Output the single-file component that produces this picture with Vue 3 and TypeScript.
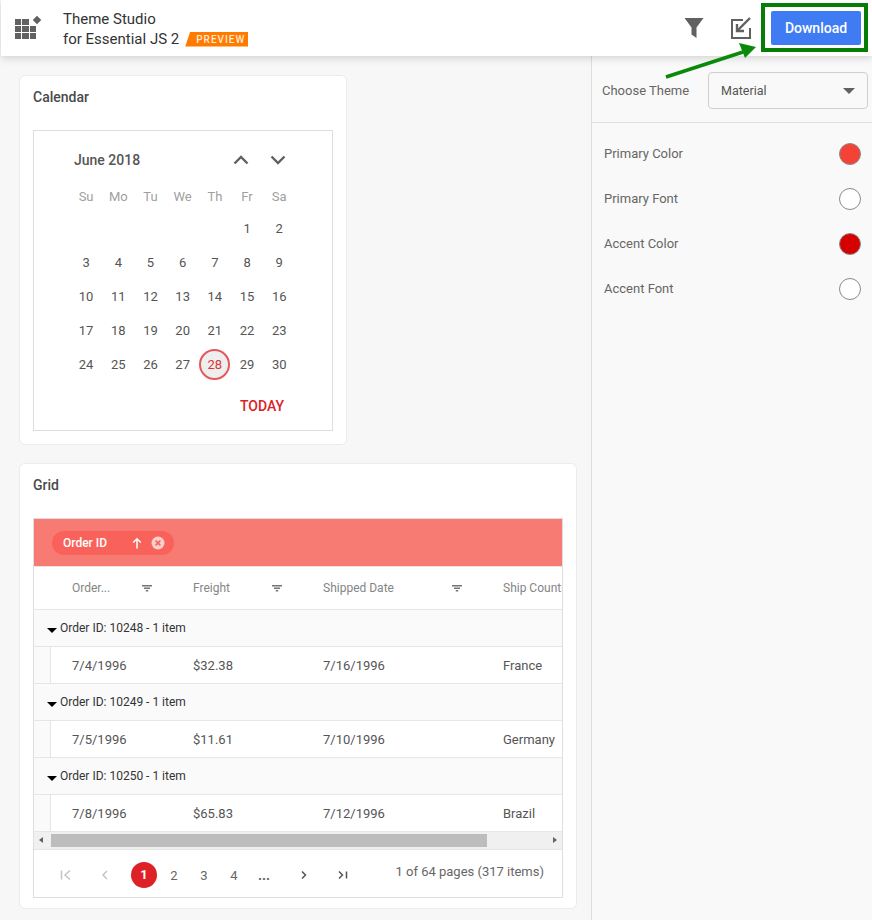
<script setup lang="ts">
const weekdays = ['Su', 'Mo', 'Tu', 'We', 'Th', 'Fr', 'Sa']
const blanks = [1, 2, 3, 4, 5]
const days = Array.from({ length: 30 }, (_, i) => i + 1)

const orders = [
  { id: 10248, date: '7/4/1996', freight: '$32.38', shipped: '7/16/1996', country: 'France' },
  { id: 10249, date: '7/5/1996', freight: '$11.61', shipped: '7/10/1996', country: 'Germany' },
  { id: 10250, date: '7/8/1996', freight: '$65.83', shipped: '7/12/1996', country: 'Brazil' }
]

const columns = ['Order...', 'Freight', 'Shipped Date', 'Ship Country']

const themeRows = [
  { label: 'Primary Color', color: '#f44336' },
  { label: 'Primary Font', color: '#ffffff' },
  { label: 'Accent Color', color: '#d50000' },
  { label: 'Accent Font', color: '#ffffff' }
]
</script>

<template>
  <div class="page">
    <header class="topbar">
      <div class="logo">
        <span></span><span></span><span class="diamond"></span>
        <span></span><span></span><span></span>
        <span></span><span></span><span></span>
      </div>
      <div class="title">
        <div>Theme Studio</div>
        <div class="title-sub">for Essential JS 2 <span class="badge">PREVIEW</span></div>
      </div>
      <div class="top-actions">
        <svg class="ico-filter" width="22" height="22" viewBox="0 0 22 22">
          <path d="M1.500 1h19l-7 9.500V21l-5-3.500v-7z" fill="#616161" />
        </svg>
        <svg class="ico-export" width="24" height="24" viewBox="0 0 24 24" fill="none" stroke="#616161" stroke-width="2">
          <path d="M14 4H3v18h18V12" />
          <path d="M21 2 9 14" stroke-width="2.4" />
          <path d="M8 8v7h7" stroke-width="2.4" />
        </svg>
        <button class="download">Download</button>
      </div>
    </header>

    <div class="body">
      <main class="content">
        <section class="card calendar-card">
          <h2>Calendar</h2>
          <div class="calendar">
            <div class="cal-head">
              <span class="cal-title">June 2018</span>
              <svg width="16" height="12" viewBox="0 0 16 12" fill="none" stroke="#616161" stroke-width="2.4">
                <path d="M1.500 9.500 8 3l6.500 6.500" />
              </svg>
              <svg class="cal-next" width="16" height="12" viewBox="0 0 16 12" fill="none" stroke="#616161" stroke-width="2.4">
                <path d="M1.500 2.500 8 9l6.500-6.500" />
              </svg>
            </div>
            <div class="cal-week">
              <span v-for="d in weekdays" :key="d">{{ d }}</span>
            </div>
            <div class="cal-days">
              <span v-for="b in blanks" :key="'b' + b"></span>
              <span v-for="d in days" :key="d" class="day" :class="{ today: d === 28 }">
                <i>{{ d }}</i>
              </span>
            </div>
            <div class="cal-foot">TODAY</div>
          </div>
        </section>

        <section class="card grid-card">
          <h2>Grid</h2>
          <div class="grid">
            <div class="drop-area">
              <div class="chip">
                <span class="chip-text">Order ID</span>
                <svg width="10" height="12" viewBox="0 0 10 12" fill="none" stroke="#fff" stroke-width="1.5">
                  <path d="M5 11.500V2M1.200 5.500 5 1.800l3.800 3.700" />
                </svg>
                <svg class="chip-x" width="14" height="14" viewBox="0 0 14 14">
                  <circle cx="7" cy="7" r="6.500" fill="#fbd0cd" />
                  <path d="M4.600 4.600l4.800 4.800M9.400 4.600 4.600 9.400" stroke="#f9625a" stroke-width="1.600" />
                </svg>
              </div>
            </div>
            <div class="grid-clip">
              <div class="row head">
                <div class="indent"></div>
                <div v-for="c in columns" :key="c" class="cell">
                  <span>{{ c }}</span>
                  <svg v-if="c !== 'Ship Country'" class="col-filter" width="10" height="7" viewBox="0 0 10 7">
                    <path d="M0 0h10v1.500H0zM2 2.600h6V4H2zM3.800 5h2.400v1.400H3.800z" fill="#757575" />
                  </svg>
                </div>
              </div>
              <template v-for="o in orders" :key="o.id">
                <div class="group-row">
                  <i class="caret"></i>
                  <span>Order ID: {{ o.id }} - 1 item</span>
                </div>
                <div class="row data">
                  <div class="indent"></div>
                  <div class="cell">{{ o.date }}</div>
                  <div class="cell">{{ o.freight }}</div>
                  <div class="cell">{{ o.shipped }}</div>
                  <div class="cell">{{ o.country }}</div>
                </div>
              </template>
            </div>
            <div class="scrollbar">
              <i class="sb-left"></i>
              <div class="sb-thumb"></div>
              <i class="sb-right"></i>
            </div>
            <div class="pager">
              <div class="pages">
                <svg class="pg-first" width="12" height="12" viewBox="0 0 12 12" fill="none" stroke="#c4c4c4" stroke-width="1.500">
                  <path d="M1.500 1.500v9M10 1.500 5 6l5 4.500" />
                </svg>
                <svg class="pg-prev" width="12" height="12" viewBox="0 0 12 12" fill="none" stroke="#c4c4c4" stroke-width="1.500">
                  <path d="M8 2 4 6l4 4" />
                </svg>
                <span class="pg-num current">1</span>
                <span class="pg-num">2</span>
                <span class="pg-num">3</span>
                <span class="pg-num">4</span>
                <span class="pg-num dots">...</span>
                <svg class="pg-next" width="12" height="12" viewBox="0 0 12 12" fill="none" stroke="#555" stroke-width="1.500">
                  <path d="M4 2.500 7.500 6 4 9.500" />
                </svg>
                <svg class="pg-last" width="12" height="12" viewBox="0 0 12 12" fill="none" stroke="#555" stroke-width="1.500">
                  <path d="M2 2.500 5.500 6 2 9.500M9.500 2.500v7" />
                </svg>
              </div>
              <span class="pg-info">1 of 64 pages (317 items)</span>
            </div>
          </div>
        </section>
      </main>

      <aside class="sidebar">
        <div class="theme-pick">
          <span class="pick-label">Choose Theme</span>
          <div class="select">
            <span>Material</span>
            <i class="select-caret"></i>
          </div>
        </div>
        <div class="theme-rows">
          <div v-for="r in themeRows" :key="r.label" class="theme-row">
            <span>{{ r.label }}</span>
            <i class="swatch" :style="{ background: r.color }"></i>
          </div>
        </div>
      </aside>
    </div>

    <!-- annotation over the screenshot -->
    <div class="callout"></div>
    <svg class="callout-arrow" width="100" height="40" viewBox="0 0 100 40">
      <path d="M1 35 78 10" stroke="#0a8a0a" stroke-width="3.500" fill="none" />
      <path d="M91 5 74 1l6 15z" fill="#0a8a0a" />
    </svg>
  </div>
</template>

<style>
html,
body {
  margin: 0;
  background: #f7f7f7;
}
</style>

<style scoped>
.page {
  position: relative;
  width: 872px;
  height: 920px;
  overflow: hidden;
  display: flex;
  flex-direction: column;
  background: #f7f7f7;
  font-family: Roboto, 'Liberation Sans', sans-serif;
  color: #444;
}

/* 顶部栏 */
.topbar {
  position: relative;
  z-index: 2;
  flex: 0 0 56px;
  display: flex;
  align-items: center;
  margin-left: 1px;
  background: #fff;
  box-shadow: 0 2px 8px rgba(0, 0, 0, 0.16);
}

.logo {
  display: grid;
  grid-template-columns: repeat(3, 6.33px);
  grid-auto-rows: 6.33px;
  gap: 1px;
  margin: 2px 0 0 14px;
}

.logo span {
  background: #616161;
}

.logo .diamond {
  width: 6px;
  height: 6px;
  transform: translate(4px, -2px) rotate(45deg);
}

.title {
  margin-left: 27px;
  padding-top: 2px;
  font-size: 15px;
  line-height: 20px;
  color: #333;
}

.title-sub {
  display: flex;
  align-items: center;
  gap: 6px;
}

.badge {
  display: inline-block;
  height: 15px;
  padding: 0 4px 0 11px;
  width: 48px;
  background: #ff7b00;
  clip-path: polygon(5px 0, 100% 0, 100% 100%, 0 100%);
  color: #ffe9d4;
  font-size: 10px;
  font-weight: 500;
  line-height: 16px;
  letter-spacing: 1px;
}

.top-actions {
  margin-left: auto;
  display: flex;
  align-items: center;
  padding-right: 11px;
}

.ico-export {
  margin: 0 18px 0 24px;
}

.download {
  width: 90px;
  height: 34px;
  padding: 0;
  border: none;
  border-radius: 2px;
  background: #3f7cf4;
  color: #fff;
  font-family: inherit;
  font-size: 14px;
  font-weight: 500;
}

.body {
  flex: 1;
  display: flex;
  min-height: 0;
}

.content {
  flex: 0 0 591px;
  box-sizing: border-box;
  padding: 19px 0 0 19px;
  display: flex;
  flex-direction: column;
  align-items: flex-start;
  gap: 18px;
}

.card {
  box-sizing: border-box;
  padding: 0 13px 12px;
  background: #fff;
  border: 1px solid #ececec;
  border-radius: 6px;
}

.card h2 {
  margin: 0;
  font-size: 14px;
  font-weight: 500;
  line-height: 20px;
  color: #4a4a4a;
}

/* 日历 */
.calendar-card {
  width: 328px;
  height: 370px;
  padding-bottom: 13px;
}

.calendar-card h2 {
  padding: 11px 0 23px;
}

.calendar {
  box-sizing: border-box;
  height: 301px;
  padding: 0 37px 0 36px;
  border: 1px solid #dedede;
}

.cal-head {
  display: flex;
  align-items: center;
  height: 58px;
  padding-left: 4px;
}

.cal-title {
  flex: 1;
  font-size: 14px;
  font-weight: 500;
  color: #555;
}

.cal-next {
  margin: 0 9px 0 21px;
}

.cal-week,
.cal-days {
  display: grid;
  grid-template-columns: repeat(7, 32.2px);
  text-align: center;
}

.cal-week {
  height: 22px;
  margin-top: 1px;
  font-size: 13px;
  line-height: 14px;
  color: #a0a0a0;
}

.cal-days {
  margin-top: -1px;
  grid-auto-rows: 34px;
  font-size: 13px;
  color: #555;
}

.day {
  display: flex;
  align-items: center;
  justify-content: center;
}

.day i {
  font-style: normal;
}

.today i {
  box-sizing: border-box;
  width: 31px;
  height: 31px;
  border: 2px solid #e5575b;
  border-radius: 50%;
  background: #eeeeee;
  color: #d9363b;
  line-height: 28px;
}

.cal-foot {
  margin-top: 16px;
  padding-right: 11px;
  text-align: right;
  font-size: 14px;
  font-weight: 500;
  line-height: 18px;
  color: #dc2127;
}

/* 表格 */
.grid-card {
  width: 558px;
  height: 446px;
}

.grid-card h2 {
  padding: 11px 0 23px;
}

.grid {
  box-sizing: border-box;
  height: 380px;
  border: 1px solid #dedede;
  overflow: hidden;
}

.drop-area {
  box-sizing: border-box;
  height: 48px;
  padding: 12px 18px;
  background: #f87b73;
  border-bottom: 1px solid #e6e6e6;
}

.chip {
  display: flex;
  align-items: center;
  width: 122px;
  height: 24px;
  box-sizing: border-box;
  padding: 0 9px 0 11px;
  border-radius: 12px;
  background: #f9625a;
  color: #fff;
  font-size: 12px;
  font-weight: 500;
}

.chip-text {
  flex: 1;
}

.chip-x {
  margin-left: 9px;
}

.grid-clip {
  overflow: hidden;
  height: 265px;
}

.row {
  display: grid;
  grid-template-columns: 17px 121px 130px 180px 120px;
  width: 600px;
  box-sizing: border-box;
}

.row.head {
  height: 43px;
  border-bottom: 1px solid #e6e6e6;
  font-size: 12px;
  color: #858585;
}

.row.data {
  height: 37px;
  font-size: 13px;
  color: #555;
  border-bottom: 1px solid #e6e6e6;
}

.row .indent {
  box-sizing: border-box;
  border-right: 1px solid transparent;
}

.row.data .indent {
  background: #fafafa;
  border-right-color: #e6e6e6;
}

.cell {
  position: relative;
  display: flex;
  align-items: center;
  padding-left: 21px;
  white-space: nowrap;
}

.col-filter {
  position: absolute;
  right: 20px;
  top: 18px;
}

.group-row {
  display: flex;
  align-items: center;
  box-sizing: border-box;
  height: 37px;
  padding-left: 13px;
  background: #fafafa;
  border-bottom: 1px solid #e6e6e6;
  font-size: 12px;
  color: #333;
}

.caret {
  width: 0;
  height: 0;
  margin: 5px 3px 0 0;
  border-left: 5px solid transparent;
  border-right: 5px solid transparent;
  border-top: 5px solid #000;
}

.scrollbar {
  position: relative;
  height: 18px;
  background: #f0f0f0;
  border-bottom: 1px solid #e6e6e6;
  box-sizing: border-box;
}

.sb-thumb {
  position: absolute;
  left: 17px;
  top: 2px;
  width: 436px;
  height: 13px;
  background: #bdbdbd;
}

.sb-left,
.sb-right {
  position: absolute;
  top: 5px;
  width: 0;
  height: 0;
  border-top: 3.5px solid transparent;
  border-bottom: 3.5px solid transparent;
}

.sb-left {
  left: 5px;
  border-right: 4px solid #616161;
}

.sb-right {
  right: 5px;
  border-left: 4px solid #616161;
}

.pager {
  display: flex;
  align-items: center;
  justify-content: space-between;
  height: 46px;
  padding: 0 18px 0 26px;
  font-size: 13px;
  color: #666;
}

.pages {
  display: flex;
  align-items: center;
  padding-top: 4px;
}

.pg-prev {
  margin-left: 27px;
}

.pg-num {
  width: 30px;
  text-align: center;
  font-size: 13px;
}

.pg-num.current {
  width: 26px;
  height: 26px;
  margin: 0 2px 0 20px;
  border-radius: 50%;
  background: #dc2127;
  color: #fff;
  font-weight: 700;
  line-height: 26px;
}

.dots {
  font-size: 14px;
  font-weight: 700;
  line-height: 1;
}

.pg-next {
  margin-left: 19px;
}

.pg-last {
  margin-left: 27px;
}

.pg-info {
  margin-bottom: 4px;
  font-size: 13px;
  color: #666;
}

/* 右侧栏 */
.sidebar {
  flex: 1;
  box-sizing: border-box;
  background: #f9f9f9;
  border-left: 1px solid #dedede;
  font-size: 13px;
  color: #666;
}

.theme-pick {
  display: flex;
  align-items: center;
  justify-content: space-between;
  box-sizing: border-box;
  height: 67px;
  padding: 3px 4px 0 10px;
  border-bottom: 1px solid #dedede;
}

.pick-label {
  margin-bottom: 1px;
}

.select {
  display: flex;
  align-items: center;
  justify-content: space-between;
  box-sizing: border-box;
  width: 160px;
  height: 37px;
  padding: 0 12px 0 12px;
  border: 1px solid #cfcfcf;
  border-radius: 4px;
  color: #555;
  font-size: 12.5px;
}

.select-caret {
  width: 0;
  height: 0;
  border-left: 6px solid transparent;
  border-right: 6px solid transparent;
  border-top: 6px solid #616161;
}

.theme-rows {
  padding: 8px 11px 0 12px;
}

.theme-row {
  display: flex;
  align-items: center;
  justify-content: space-between;
  height: 45px;
}

.swatch {
  box-sizing: border-box;
  width: 22px;
  height: 22px;
  border: 1px solid #8a8a8a;
  border-radius: 50%;
}

/* 标注 */
.callout {
  position: absolute;
  z-index: 3;
  left: 761px;
  top: 3px;
  box-sizing: border-box;
  width: 107px;
  height: 49px;
  border: 4px solid #067d06;
}

.callout-arrow {
  position: absolute;
  z-index: 3;
  left: 665px;
  top: 42px;
}
</style>
